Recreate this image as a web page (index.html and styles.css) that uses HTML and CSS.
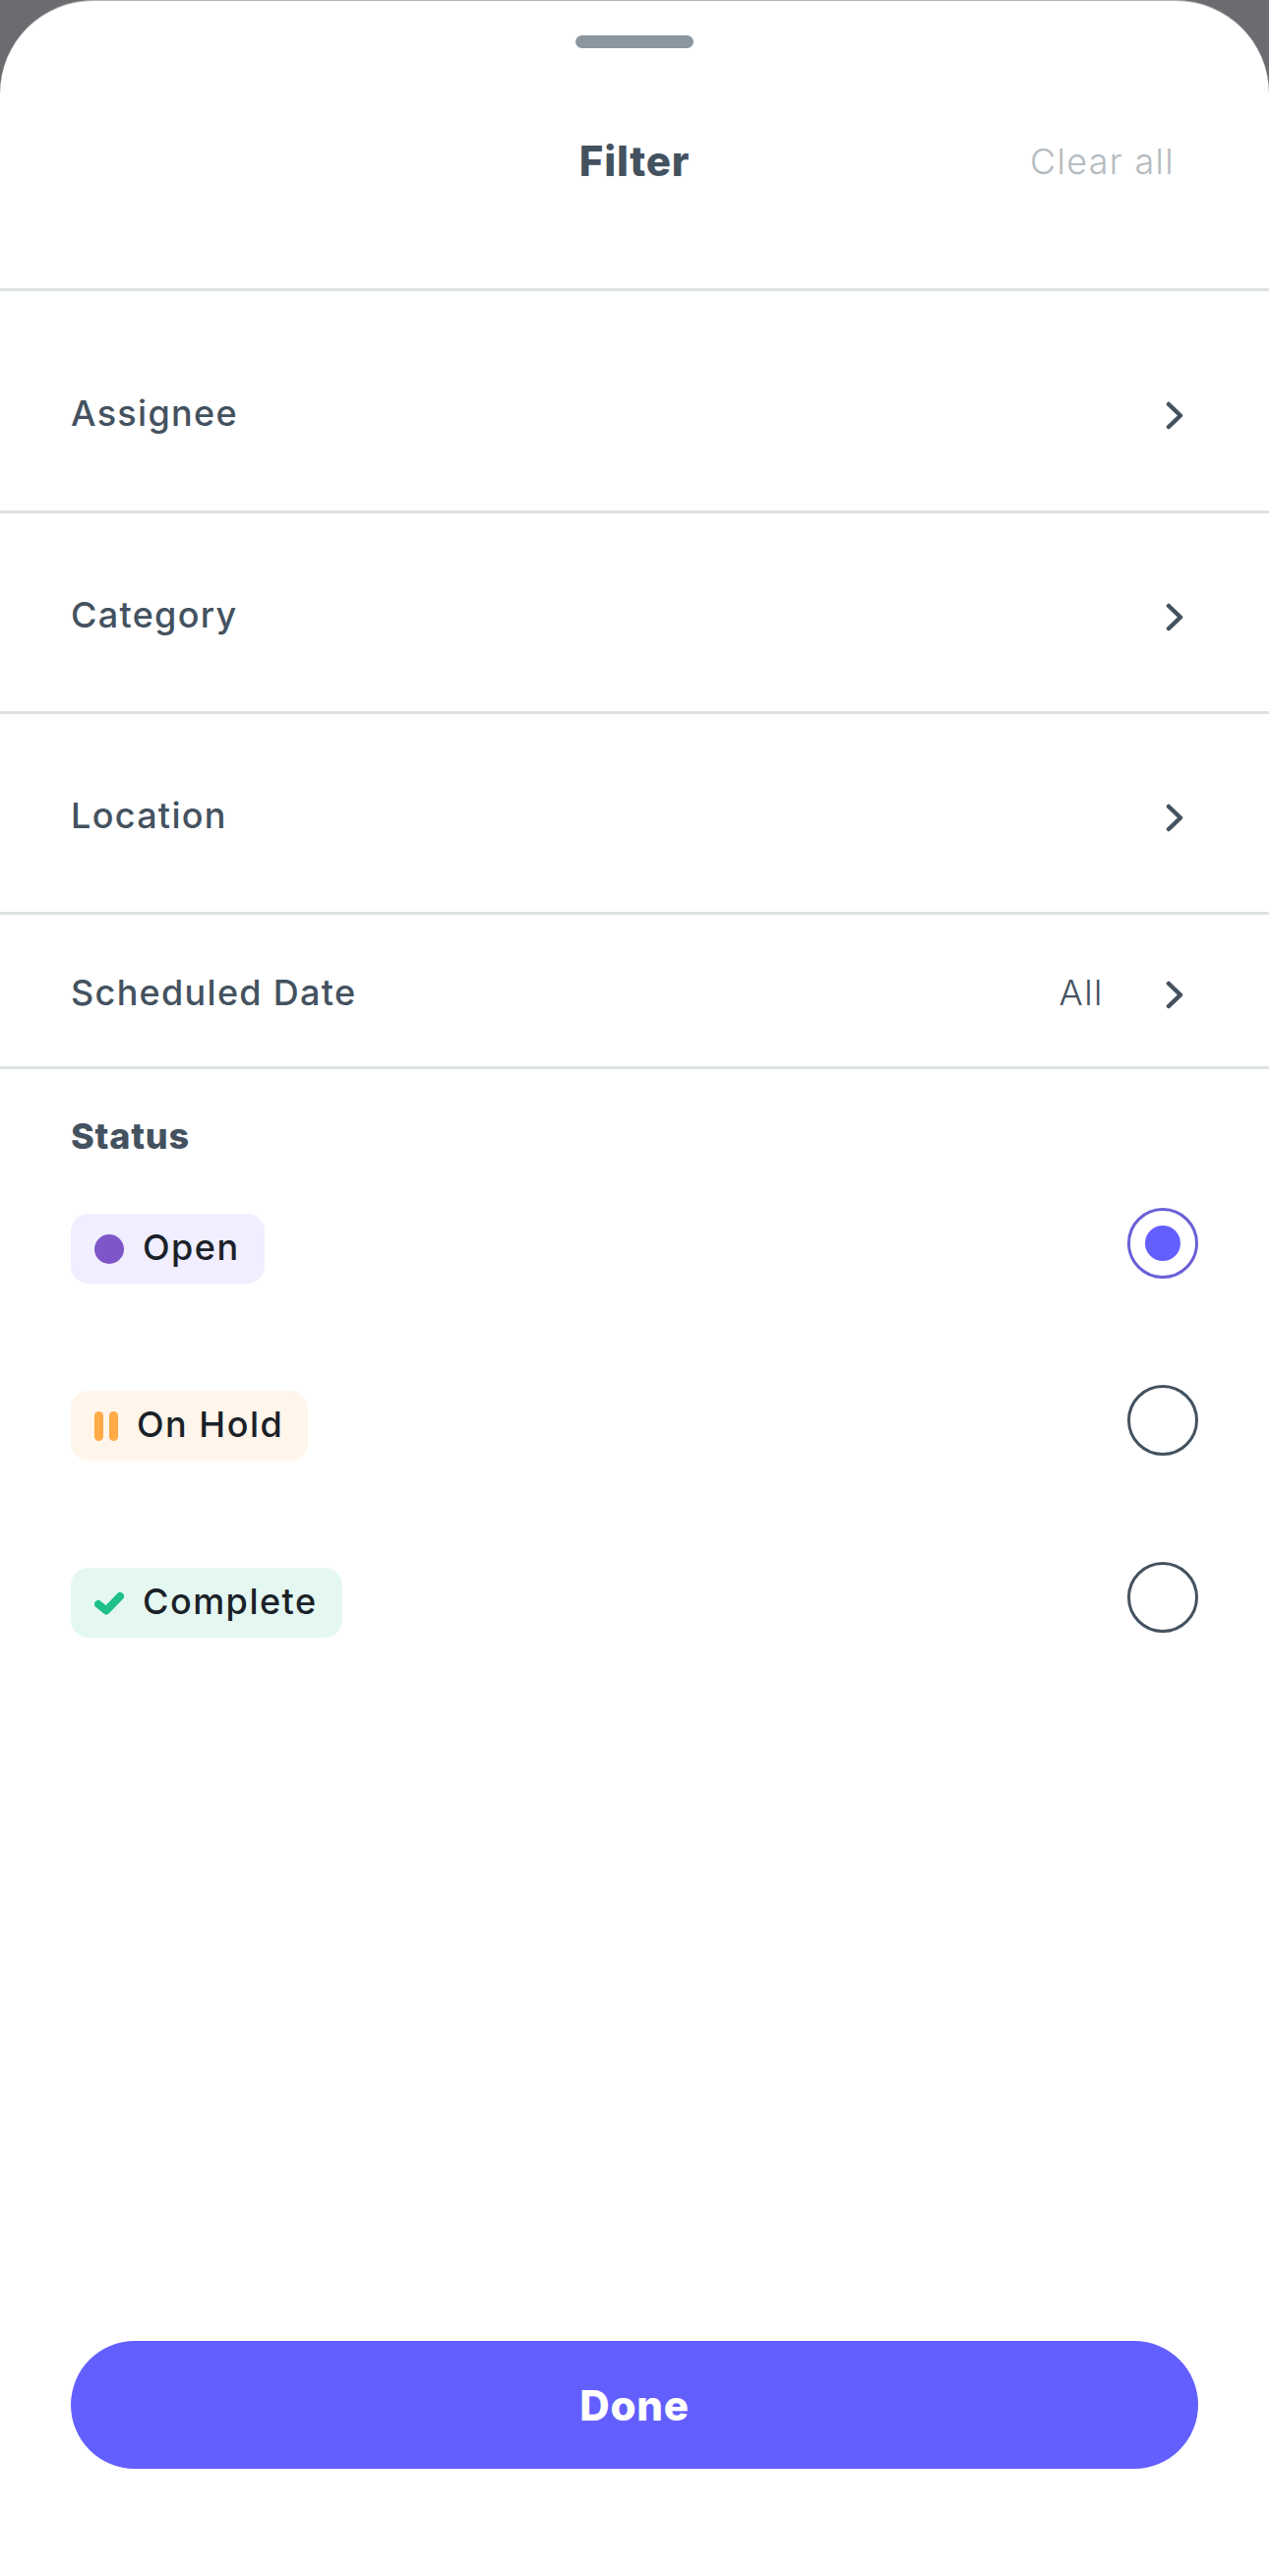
FILE: index.html
```html
<!DOCTYPE html>
<html lang="en">
<head>
<meta charset="utf-8">
<title>Filter</title>
<link rel="stylesheet" href="styles.css">
</head>
<body>
<main class="sheet">
  <div class="handle"></div>
  <header class="head">
    <h1 class="title">Filter</h1>
    <span class="clear">Clear all</span>
  </header>
  <div class="row row-assignee"><span class="label">Assignee</span>
    <svg class="chev" viewBox="0 0 18 29"><path d="M3 3l12 11.500L3 26"/></svg></div>
  <div class="row row-mid"><span class="label">Category</span>
    <svg class="chev" viewBox="0 0 18 29"><path d="M3 3l12 11.500L3 26"/></svg></div>
  <div class="row row-mid"><span class="label">Location</span>
    <svg class="chev" viewBox="0 0 18 29"><path d="M3 3l12 11.500L3 26"/></svg></div>
  <div class="row row-date"><span class="label">Scheduled Date</span>
    <span class="value">All</span>
    <svg class="chev" viewBox="0 0 18 29"><path d="M3 3l12 11.500L3 26"/></svg></div>
  <section class="status">
    <h2 class="status-title">Status</h2>
    <div class="option">
      <span class="chip chip-open"><span class="dot"></span>Open</span>
      <span class="radio radio-on"></span>
    </div>
    <div class="option">
      <span class="chip chip-hold"><span class="pause"><i></i><i></i></span>On Hold</span>
      <span class="radio"></span>
    </div>
    <div class="option">
      <span class="chip chip-done"><svg class="check" viewBox="0 0 30 24"><path d="M4 13l8 6.500L26 5"/></svg>Complete</span>
      <span class="radio"></span>
    </div>
  </section>
  <button class="done">Done</button>
</main>
</body>
</html>
```
FILE: styles.css
```css
* { box-sizing: border-box; }
html, body { margin: 0; padding: 0; }
body { background: #6b6b70; font-family: "Inter", "Liberation Sans", sans-serif; }
.sheet {
  width: 1290px; height: 2619px; background: #fff;
  border-top: 1px solid #b2b2b4;
  border-radius: 95px 95px 0 0;
  display: flex; flex-direction: column;
}
.handle { width: 120px; height: 13px; border-radius: 7px; background: #8b969e; margin: 35px auto 0; }
.head {
  height: 247px; border-bottom: 3px solid #dce1e3;
  display: grid; grid-template-columns: 1fr auto 1fr; align-items: start;
  padding-top: 91px;
}
.title { grid-column: 2; margin: 0; font-size: 42px; line-height: 48px; font-weight: 800; color: #44525f; letter-spacing: .8px; }
.clear { justify-self: end; margin-right: 96px; font-size: 36px; line-height: 48px; color: #b4bbc0; letter-spacing: 1.3px; font-weight: 300; }
.row {
  display: flex; align-items: center; padding: 0 87px 0 72px;
  border-bottom: 3px solid #dce1e3; color: #44525f;
}
.row-assignee { height: 226px; padding-top: 25px; }
.row-mid { height: 204px; padding-top: 5px; }
.row-date { height: 157px; padding-top: 3px; }
.label { flex: 1; font-size: 36px; line-height: 44px; font-weight: 500; letter-spacing: 1.300px; }
.value { font-size: 36px; line-height: 44px; margin-right: 63px; font-weight: 300; letter-spacing: 1.500px; }
.chev { width: 18px; height: 29px; margin-top: 5px; fill: none; stroke: #44525f; stroke-width: 4.500; stroke-linecap: round; stroke-linejoin: round; }
.status { padding: 0 72px; }
.status-title { margin: 46px 0 0; font-size: 36px; line-height: 44px; font-weight: 800; color: #44525f; letter-spacing: .8px; }
.option { display: flex; justify-content: space-between; align-items: flex-start; height: 180px; }
.status-title + .option { margin-top: 51px; }
.chip {
  display: flex; align-items: center; height: 71px; margin-top: 6px;
  padding: 0 25px 4px 24px; border-radius: 18px; font-size: 36px; font-weight: 500; color: #1a2128; letter-spacing: 1.500px;
}
.chip-open { background: #f0eeff; }
.chip-hold { background: #fff5eb; }
.chip-done { background: #e5f7f1; }
.dot { width: 30px; height: 30px; border-radius: 50%; background: #7f56c9; margin: 4px 19px 0 0; }
.pause { display: flex; gap: 6px; margin: 4px 19px 0 0; }
.pause i { display: block; width: 9px; height: 30px; border-radius: 5px; background: #ffa947; }
.check { width: 30px; height: 24px; margin: 4px 19px 0 0; fill: none; stroke: #1fbf8a; stroke-width: 8; stroke-linecap: round; stroke-linejoin: round; }
.radio { width: 72px; height: 72px; border: 3px solid #44525f; border-radius: 50%; display: flex; align-items: center; justify-content: center; }
.radio-on { border-color: #6a5fd8; }
.radio-on::after { content: ""; width: 36px; height: 36px; border-radius: 50%; background: #635fff; }
.done {
  margin: auto 72px 109px; height: 130px; border: 0; border-radius: 65px;
  background: #635fff; color: #fff; font-family: inherit; font-size: 42px; font-weight: 800; letter-spacing: .8px;
}
```
